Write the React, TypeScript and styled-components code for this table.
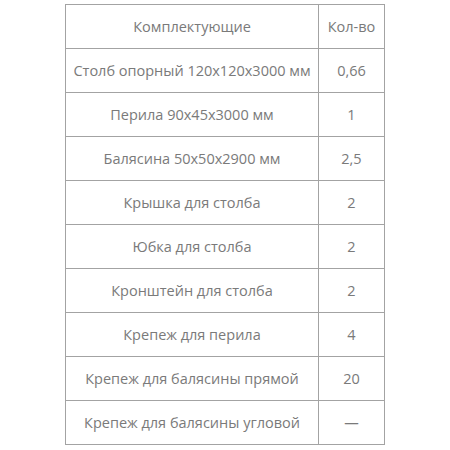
import React from "react";
import styled, { createGlobalStyle } from "styled-components";

const Global = createGlobalStyle`
  html, body { margin: 0; padding: 0; background: #ffffff; }
  body { font-family: "Open Sans", "Noto Sans", sans-serif; }
`;

const Page = styled.div`
  padding: 4px 0 0 65px;
`;

const Table = styled.table`
  border-collapse: collapse;
  width: 320px;
  table-layout: fixed;
  color: #7a7a7a;
  font-size: 14.5px;
`;

const Cell = styled.td<{ $narrow?: boolean }>`
  border: 1px solid #a3a3a3;
  height: 43px;
  padding: 0;
  text-align: center;
  vertical-align: middle;
  width: ${(p) => (p.$narrow ? "65px" : "252px")};
  white-space: nowrap;
`;

const rows: [string, string][] = [
  ["Столб опорный 120x120x3000 мм", "0,66"],
  ["Перила 90x45x3000 мм", "1"],
  ["Балясина 50x50x2900 мм", "2,5"],
  ["Крышка для столба", "2"],
  ["Юбка для столба", "2"],
  ["Кронштейн для столба", "2"],
  ["Крепеж для перила", "4"],
  ["Крепеж для балясины прямой", "20"],
  ["Крепеж для балясины угловой", "—"],
];

export default function App() {
  return (
    <>
      <Global />
      <Page>
        <Table>
          <tbody>
            <tr>
              <Cell>Комплектующие</Cell>
              <Cell $narrow>Кол-во</Cell>
            </tr>
            {rows.map(([a, b]) => (
              <tr key={a}>
                <Cell>{a}</Cell>
                <Cell $narrow>{b}</Cell>
              </tr>
            ))}
          </tbody>
        </Table>
      </Page>
    </>
  );
}
